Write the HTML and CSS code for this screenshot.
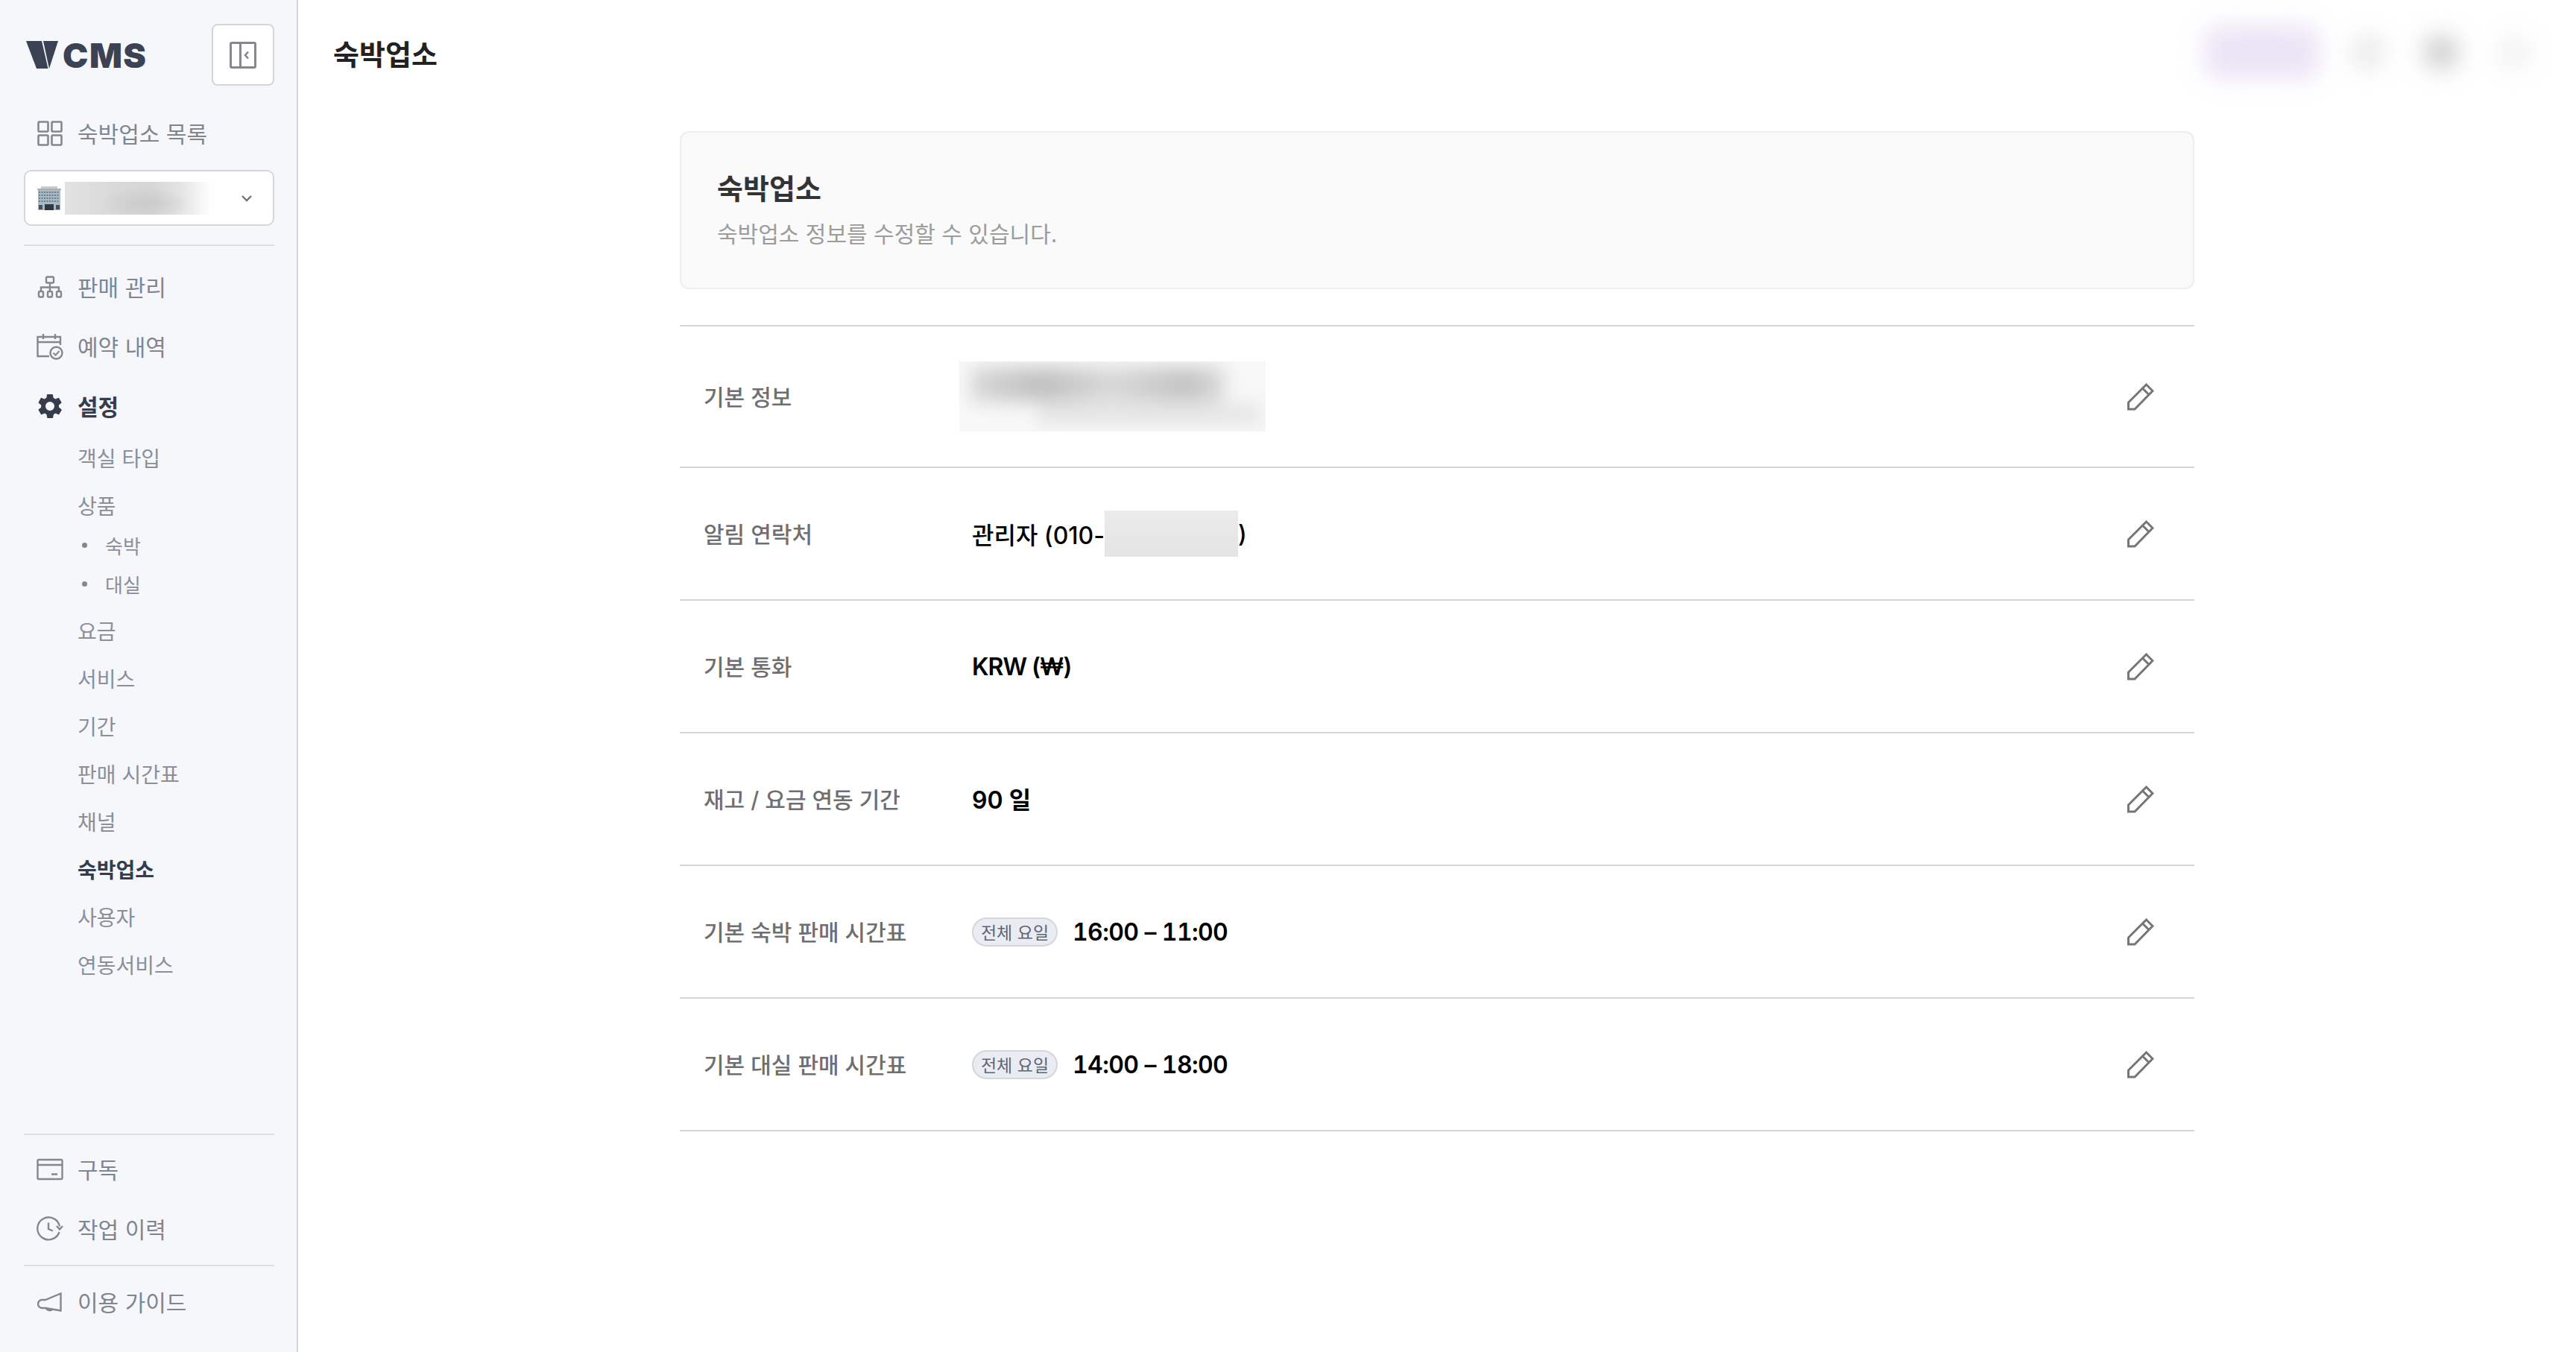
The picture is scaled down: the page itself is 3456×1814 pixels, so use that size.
FILE: index.html
```html
<!DOCTYPE html>
<html lang="ko">
<head>
<meta charset="utf-8">
<title>숙박업소</title>
<link rel="stylesheet" href="styles.css">
</head>
<body>
<div class="app">
  <aside class="sidebar">
    <div class="brand-row">
      <div class="logo">
        <svg class="logo-v" viewBox="0 0 43 37"><path d="M0 0H21L29.500 37H14Z" fill="#3a4254"/><path d="M23 0H43L31 37Z" fill="#3a4254"/></svg>
        <span class="logo-text">CMS</span>
      </div>
      <button class="toggle">
        <svg viewBox="0 0 36 36" class="toggle-icon"><rect x="1.500" y="1.500" width="33" height="33" rx="1.500" fill="none" stroke="#84878e" stroke-width="3"/><path d="M14.500 2V34" stroke="#84878e" stroke-width="3"/><path d="M25 13.500L21 18L25 22.500" fill="none" stroke="#84878e" stroke-width="2.600"/></svg>
      </button>
    </div>
    <a class="nav-item first">
      <svg class="nav-icon" viewBox="0 0 34 34" fill="none" stroke="#84878e" stroke-width="2.600"><rect x="1.500" y="1.500" width="13" height="13" rx="1"/><rect x="19.500" y="1.500" width="13" height="13" rx="1"/><rect x="1.500" y="19.500" width="13" height="13" rx="1"/><rect x="19.500" y="19.500" width="13" height="13" rx="1"/></svg>
      <span>숙박업소 목록</span>
    </a>
    <div class="select">
      <svg class="building" viewBox="0 0 32 32"><rect x="5" y="0" width="22" height="3" fill="#c9ccc9"/><rect x="0" y="3" width="32" height="2" fill="#aab0b0"/><rect x="1" y="5" width="30" height="27" fill="#a9bac4"/><path d="M2 8H30M2 12H30M2 16H30M2 20H30" stroke="#55697a" stroke-width="1.600" stroke-dasharray="2 1.500"/><rect x="10" y="24" width="12" height="8" fill="#2f3a44"/><rect x="2" y="25" width="5" height="6" fill="#46535e"/><rect x="25" y="25" width="5" height="6" fill="#46535e"/></svg>
      <div class="select-blur"><div class="select-blur-in"></div></div>
      <svg class="chev" viewBox="0 0 14 10" fill="none" stroke="#6f737b" stroke-width="2.400"><path d="M1 2L7 8L13 2"/></svg>
    </div>
    <div class="divider d-top"></div>
    <nav class="nav-main">
      <a class="nav-item">
        <svg class="nav-icon" viewBox="0 0 34 30" fill="none" stroke="#84878e" stroke-width="2.400"><rect x="12" y="1.500" width="10" height="8" rx="1.500"/><rect x="2" y="21" width="6" height="7.500" rx="1.500"/><rect x="14" y="21" width="6" height="7.500" rx="1.500"/><rect x="26" y="21" width="6" height="7.500" rx="1.500"/><path d="M17 10V21M5 21V15.500H29V21"/></svg>
        <span>판매 관리</span>
      </a>
      <a class="nav-item">
        <svg class="nav-icon wide" viewBox="0 0 36 36" fill="none" stroke="#84878e" stroke-width="2.400"><path d="M17 31H1.500V5H32V16M1.500 12H32M9 1V8M25 1V8"/><circle cx="26.500" cy="26.500" r="8" fill="#f5f7fb"/><path d="M22.500 26.500L25.500 29.500L30.500 24" stroke-width="2"/></svg>
        <span>예약 내역</span>
      </a>
      <a class="nav-item active">
        <svg class="nav-icon" viewBox="2.500 1.800 19 20.400"><path fill="#363c4c" d="M19.140 12.940c.04-.3.060-.61.060-.94s-.02-.64-.07-.94l2.030-1.580a.5.500 0 0 0 .12-.64l-1.920-3.320a.5.500 0 0 0-.61-.22l-2.390.96a7 7 0 0 0-1.620-.94l-.36-2.540a.5.500 0 0 0-.49-.42h-3.840a.5.500 0 0 0-.48.42l-.36 2.540c-.59.24-1.130.57-1.620.94l-2.390-.96a.5.500 0 0 0-.61.22L2.830 8.840a.5.500 0 0 0 .12.64l2.030 1.580c-.05.3-.09.63-.09.94s.02.64.07.94l-2.030 1.580a.5.500 0 0 0-.12.64l1.920 3.320c.12.22.37.29.61.22l2.390-.96c.5.38 1.030.7 1.620.94l.36 2.540c.05.24.24.42.48.42h3.840c.24 0 .44-.18.48-.42l.36-2.540c.59-.24 1.130-.56 1.620-.94l2.390.96c.22.08.49 0 .61-.22l1.920-3.320a.5.500 0 0 0-.12-.64l-2.010-1.580zM12 15.600A3.600 3.600 0 1 1 12 8.400a3.600 3.600 0 0 1 0 7.200z"/></svg>
        <span>설정</span>
      </a>
      <div class="sub">
        <a class="sub-item">객실 타입</a>
        <a class="sub-item">상품</a>
        <ul class="subsub">
          <li>숙박</li>
          <li>대실</li>
        </ul>
        <a class="sub-item">요금</a>
        <a class="sub-item">서비스</a>
        <a class="sub-item">기간</a>
        <a class="sub-item">판매 시간표</a>
        <a class="sub-item">채널</a>
        <a class="sub-item current">숙박업소</a>
        <a class="sub-item">사용자</a>
        <a class="sub-item">연동서비스</a>
      </div>
    </nav>
    <div class="bottom">
      <div class="divider d-b1"></div>
      <a class="nav-item">
        <svg class="nav-icon wide" viewBox="0 0 36 29" fill="none" stroke="#84878e" stroke-width="2.400"><rect x="1.500" y="1.500" width="33" height="26" rx="1.500"/><path d="M2 8.500H34M20 21H28"/></svg>
        <span>구독</span>
      </a>
      <a class="nav-item">
        <svg class="nav-icon wide" viewBox="0 0 36 33" fill="none" stroke="#84878e" stroke-width="2.400"><path d="M30.500 20.500A15 15 0 1 1 31 13"/><path d="M35 12.500L31 17L27 12.500" stroke-width="2.200"/><path d="M16 8V16.500L22 19"/></svg>
        <span>작업 이력</span>
      </a>
      <div class="divider d-b2"></div>
      <a class="nav-item">
        <svg class="nav-icon" viewBox="0 0 34 27" fill="none" stroke="#84878e" stroke-width="2.400"><path d="M31.500 2V25L11 21.500H6.500A5 5 0 0 1 6.500 10.500H11Z"/><path d="M12 21.500A5 4 0 0 0 21 23"/></svg>
        <span>이용 가이드</span>
      </a>
    </div>
  </aside>
  <main class="main">
    <header class="topbar">
      <h1 class="page-title">숙박업소</h1>
      <div class="top-actions">
        <div class="ta-pill"></div>
        <div class="ta-dot light"></div>
        <div class="ta-dot dark"></div>
        <div class="ta-dot faint"></div>
      </div>
    </header>
    <section class="content">
      <div class="card">
        <h2 class="card-title">숙박업소</h2>
        <p class="card-sub">숙박업소 정보를 수정할 수 있습니다.</p>
      </div>
      <div class="rows">
        <div class="row tall">
          <div class="label">기본 정보</div>
          <div class="value"><div class="blur-addr"><div class="blur-addr-in"><div class="bar-a"></div><div class="bar-b"></div></div></div></div>
          <svg class="pencil" viewBox="0 0 36 37" fill="none" stroke="#757575" stroke-width="3"><path d="M1.500 26L25.500 2L34 10.500L10 35H1.500ZM20.500 7L29 15.500"/></svg>
        </div>
        <div class="row">
          <div class="label">알림 연락처</div>
          <div class="value">관리자 (010-<span class="blur-phone"></span>)</div>
          <svg class="pencil" viewBox="0 0 36 37" fill="none" stroke="#757575" stroke-width="3"><path d="M1.500 26L25.500 2L34 10.500L10 35H1.500ZM20.500 7L29 15.500"/></svg>
        </div>
        <div class="row">
          <div class="label">기본 통화</div>
          <div class="value currency">KRW (₩)</div>
          <svg class="pencil" viewBox="0 0 36 37" fill="none" stroke="#757575" stroke-width="3"><path d="M1.500 26L25.500 2L34 10.500L10 35H1.500ZM20.500 7L29 15.500"/></svg>
        </div>
        <div class="row">
          <div class="label">재고 / 요금 연동 기간</div>
          <div class="value days">90 일</div>
          <svg class="pencil" viewBox="0 0 36 37" fill="none" stroke="#757575" stroke-width="3"><path d="M1.500 26L25.500 2L34 10.500L10 35H1.500ZM20.500 7L29 15.500"/></svg>
        </div>
        <div class="row">
          <div class="label">기본 숙박 판매 시간표</div>
          <div class="value"><span class="pill">전체 요일</span><span class="time">16:00 – 11:00</span></div>
          <svg class="pencil" viewBox="0 0 36 37" fill="none" stroke="#757575" stroke-width="3"><path d="M1.500 26L25.500 2L34 10.500L10 35H1.500ZM20.500 7L29 15.500"/></svg>
        </div>
        <div class="row">
          <div class="label">기본 대실 판매 시간표</div>
          <div class="value"><span class="pill">전체 요일</span><span class="time">14:00 – 18:00</span></div>
          <svg class="pencil" viewBox="0 0 36 37" fill="none" stroke="#757575" stroke-width="3"><path d="M1.500 26L25.500 2L34 10.500L10 35H1.500ZM20.500 7L29 15.500"/></svg>
        </div>
      </div>
    </section>
  </main>
</div>
</body>
</html>
```

FILE: styles.css
```css
* { box-sizing: border-box; }
html, body { margin: 0; height: 100%; overflow: hidden; background: #fff; }
body { font-family: "Inter", "Noto Sans CJK KR", "Noto Sans", sans-serif; color: #000; }
.app { display: flex; height: 1814px; }

.sidebar { width: 400px; flex: none; height: 100%; background: #f5f7fb; border-right: 2px solid #d4d6da; padding: 32px 30px 27px 32px; display: flex; flex-direction: column; }
.brand-row { display: flex; align-items: center; justify-content: space-between; height: 83px; }
.logo { display: flex; align-items: center; gap: 6px; padding-left: 3px; }
.logo-v { width: 43px; height: 37px; }
.logo-text { font-size: 46px; font-weight: 900; color: #3a4254; letter-spacing: 1.500px; line-height: 38px; }
.toggle { width: 84px; height: 83px; background: #fff; border: 2px solid #d4d6da; border-radius: 8px; padding: 0; display: flex; align-items: center; justify-content: center; }
.toggle-icon { width: 36px; height: 36px; }

.nav-item { display: flex; align-items: center; height: 80px; padding-left: 18px; font-size: 30px; color: #808590; }
.nav-item span { padding-bottom: 3px; }
.nav-item.first { margin-top: 24px; }
.nav-icon { width: 34px; height: 34px; margin-right: 20px; flex: none; }
.nav-icon.wide { width: 36px; height: 36px; margin-left: -1px; margin-right: 19px; }
.nav-item.active { color: #363c4c; font-weight: 700; }

.select { display: flex; align-items: center; height: 75px; margin-top: 9px; background: #fff; border: 2px solid #d4d6da; border-radius: 10px; padding-left: 16px; padding-right: 28px; }
.building { width: 32px; height: 32px; flex: none; }
.select-blur { width: 194px; height: 44px; margin-left: 5px; overflow: hidden; background: #e4e4e4; }
.select-blur-in { width: 100%; height: 100%; background: radial-gradient(ellipse 60px 22px at 55% 65%, #cbcbcb 0%, rgba(203,203,203,0) 100%), linear-gradient(90deg, #e2e2e2 0%, #d9d9d9 35%, #d6d6d6 60%, #e4e4e4 80%, #fdfdfd 100%); }
.chev { width: 14px; height: 10px; margin-left: auto; }

.divider { height: 2px; background: #dcdee2; }
.d-top { margin-top: 25px; margin-bottom: 15px; }
.d-b1 { margin-bottom: 6px; }
.d-b2 { margin: 8px 0; }

.sub { display: flex; flex-direction: column; margin-top: -2px; }
.sub-item { display: flex; align-items: center; height: 64px; padding: 0 0 3px 72px; font-size: 28px; color: #8b8f98; }
.sub-item.current { color: #363c4c; font-weight: 700; }
.subsub { list-style: none; margin: -4px 0 4px; padding: 0 0 0 72px; }
.subsub li { display: flex; align-items: center; height: 52px; padding-bottom: 3px; font-size: 26px; color: #8b8f98; }
.subsub li::before { content: ""; width: 7px; height: 7px; border-radius: 50%; background: #84878e; margin: 0 24px 0 6px; }

.bottom { margin-top: auto; }

.main { flex: 1; min-width: 0; display: flex; flex-direction: column; }
.topbar { height: 140px; flex: none; display: flex; align-items: center; justify-content: space-between; padding: 0 60px 0 47px; }
.page-title { margin: 0; font-size: 38px; font-weight: 700; color: #222; }
.top-actions { display: flex; align-items: center; filter: blur(16px); }
.ta-pill { width: 155px; height: 72px; border-radius: 20px; background: #ebe4f6; margin-right: 42px; }
.ta-dot { width: 46px; height: 46px; border-radius: 50%; }
.ta-dot.light { background: #eaeaea; margin-right: 52px; }
.ta-dot.dark { background: #cbcccc; margin-right: 52px; }
.ta-dot.faint { background: #f2f2f2; }

.content { width: 2032px; margin: 36px auto 0; }
.card { height: 212px; background: #fafafa; border: 2px solid #eeeeee; border-radius: 12px; padding: 50px 48px 0; }
.card-title { margin: 0; font-size: 38px; line-height: 50px; font-weight: 700; color: #333; }
.card-sub { margin: 14px 0 0; font-size: 30px; line-height: 44px; color: #9c9c9c; font-weight: 400; }

.rows { margin-top: 48px; border-top: 2px solid #d6d6d6; }
.row { display: flex; align-items: center; height: 178px; border-bottom: 2px solid #d6d6d6; padding: 0 54px 0 32px; }
.row.tall { height: 190px; }
.label { width: 360px; flex: none; padding-bottom: 3px; font-size: 30px; color: #6f6f6f; font-weight: 500; }
.value { flex: 1; display: flex; align-items: center; font-size: 32px; font-weight: 500; color: #000; }
.value.currency { font-weight: 600; letter-spacing: -1px; }
.value.days { font-weight: 600; padding-bottom: 3px; }
.time { font-variant-numeric: tabular-nums; font-weight: 600; letter-spacing: -0.600px; }
.pencil { width: 36px; height: 37px; flex: none; }

.blur-addr { width: 411px; height: 94px; margin-left: -17px; overflow: hidden; background: #f8f8f8; }
.blur-addr-in { height: 100%; filter: blur(12px); padding-top: 8px; }
.bar-a { width: 340px; height: 46px; margin-left: 16px; background: linear-gradient(90deg, #d8d8d8 0%, #bfbfbf 28%, #d8d8d8 55%, #c2c2c2 85%, #dadada 100%); }
.bar-b { width: 300px; height: 26px; margin: 4px 0 0 105px; background: #e4e4e4; }

.blur-phone { width: 179px; height: 62px; background: linear-gradient(180deg, #ebebeb, #e4e4e4); }
.pill { display: inline-flex; align-items: center; justify-content: center; width: 115px; height: 39px; border-radius: 20px; background: #e9edf3; border: 2px solid #d4d6da; font-size: 23px; font-weight: 400; color: #5f6672; margin-right: 20px; }
```
